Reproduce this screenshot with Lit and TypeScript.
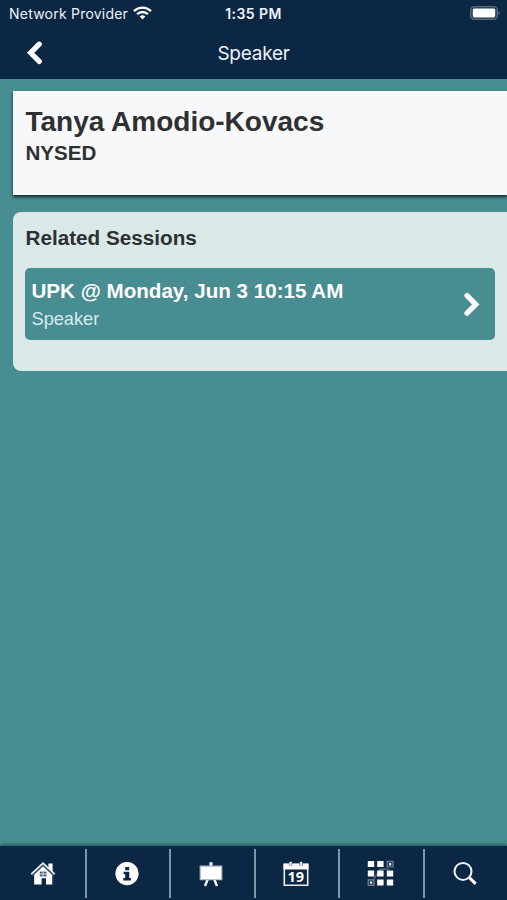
import { LitElement, html, css, svg } from "lit";
import { customElement } from "lit/decorators.js";

const home = svg`<svg width="26" height="26" viewBox="0 0 26 26">
  <path d="M18.4 2.6h4.2v8l-4.2-3.6z" fill="#fff"/>
  <path d="M13 4.8 22.3 13.2V23.6H16V17.2h-4.4v6.4H4.2V13.2z" fill="#fff"/>
  <path d="M1.8 14 13 3.4l11.2 10.6" fill="none" stroke="#3d546c" stroke-width="2.8"/>
  <path d="M1.2 13.2 13 2.2l11.8 11" fill="none" stroke="#e3ebf2" stroke-width="1.7"/>
  <path d="M9.8 10.6h6.6v4.8H9.8z" fill="#425a72"/>
  <path d="M13.1 10.4v5.2M9.8 13h6.6" stroke="#dde5ec" stroke-width="1"/>
</svg>`;

const info = svg`<svg width="26" height="26" viewBox="0 0 26 26">
  <circle cx="13" cy="12.6" r="11.6" fill="#fff"/>
  <path d="M11.2 5.9h4v3.4h-4zM9.6 10.7h5.7v6.2h1.6v2.6H9.3v-2.6h1.9v-3.6H9.6z" fill="#0b2744"/>
</svg>`;

const board = svg`<svg width="26" height="26" viewBox="0 0 26 26">
  <path d="M11.4 1.2h3.2v4h-3.2z" fill="#e4edf4"/>
  <path d="M9.6 18.6 7 25M16.4 18.6 19 25" stroke="#fff" stroke-width="2.4"/>
  <path d="M2.3 5.2h21.4v13.4H2.3z" fill="#fff" stroke="#b3c1cd" stroke-width="1.3"/>
</svg>`;

const calendar = svg`<svg width="26" height="26" viewBox="0 0 26 26">
  <path d="M1.3 3.2h23.4v21H1.3z" fill="#0b2744" stroke="#e4edf4" stroke-width="1.6"/>
  <path d="M.5 2.7h25v5.8H.5z" fill="#fff"/>
  <path d="M7.6 1v3.8M18.2 1v3.8" stroke="#51677e" stroke-width="3.4"/>
  <path d="M7.6 .8v3.6M18.2 .8v3.6" stroke="#fff" stroke-width="1.9"/>
</svg>`;

const grid = svg`<svg width="27" height="27" viewBox="0 0 27 27">
  <path d="M4.5 23 13 9.2h9" fill="none" stroke="#61758a" stroke-width="1.2"/>
  <path d="M.8 1h6.4v6H.8zM10.2 1h6.4v6h-6.4zM.8 10.4h6.4v6H.8zM10.2 10.4h6.4v6h-6.4zM19.8 10.4h6.4v6h-6.4zM10.2 19.6h6.4v6h-6.4zM19.8 19.6h6.4v6h-6.4z" fill="#fff"/>
  <path d="M20.2 1.4h5.8v5.6h-5.8zM1.2 19.8H7v5.6H1.2z" fill="#20394f" stroke="#71849a" stroke-width="1.2"/>
  <path d="M22 3.1h2.3v2.3H22zM3 21.5h2.3v2.3H3z" fill="#d8e1e9"/>
</svg>`;

const search = svg`<svg width="26" height="26" viewBox="0 0 26 26">
  <circle cx="11" cy="10.4" r="8.5" fill="none" stroke="#eff6fb" stroke-width="2"/>
  <path d="m17.3 16.6 6.4 6.2" stroke="#fff" stroke-width="3.1"/>
</svg>`;

@customElement("app-root")
export class AppRoot extends LitElement {
  static styles = css`
    :host {
      display: flex;
      flex-direction: column;
      width: 507px;
      height: 900px;
      overflow: hidden;
      background: #488d92;
      font-family: "Liberation Sans", Arial, sans-serif;
      color: #2e3032;
      white-space: nowrap;
    }
    * { box-sizing: border-box; }
    svg { display: block; flex: none; }
    header { background: #0b2744; height: 79px; flex: none; color: #edf3f8; font-family: Inter, sans-serif; }
    .status, .nav { display: grid; grid-template-columns: 1fr auto 1fr; align-items: center; }
    .status { height: 27px; padding: 0 7px 0 9px; font-size: 14px; }
    .carrier { display: flex; align-items: center; gap: 5px; letter-spacing: 0.22px; }
    .time { font-weight: 600; font-size: 14px; letter-spacing: 0.42px; padding-right: 2px; }
    .battery { justify-self: end; margin-top: -1px; }
    .wifi { margin-top: -2px; }
    .nav { height: 52px; padding: 0 26px; }
    .title { font-size: 19px; letter-spacing: -0.25px; }
    main { flex: 1; display: flex; flex-direction: column; padding: 12px 0 0 13px; }
    .person {
      height: 104px;
      padding: 14px 12px 0 12.5px;
      background: #f7f8fa;
      box-shadow: 0 2px 3px #10292d;
    }
    h1, h2, h3, p { margin: 0; }
    h1 { font-size: 28px; line-height: 34px; }
    .org { font-size: 20.6px; line-height: 28px; font-weight: 700; }
    .related {
      margin-top: 17px;
      height: 159px;
      padding: 13px 12px 0;
      border-radius: 8px 0 0 8px;
      background: #dae8e8;
    }
    h2 { font-size: 20.7px; line-height: 26px; padding-left: 0.5px; }
    .session {
      display: flex;
      align-items: center;
      justify-content: space-between;
      margin-top: 17px;
      height: 72px;
      padding: 2px 14px 0 6.5px;
      border-radius: 5px;
      background: #488d92;
      color: #fff;
    }
    h3 { font-size: 20.6px; line-height: 29px; }
    .role { font-size: 18.2px; line-height: 29px; color: #d9eaec; }
    footer {
      display: grid;
      grid-template-columns: repeat(6, 1fr);
      height: 54px;
      padding: 3px 0 2px;
      background: #0b2744;
      box-shadow: 0 -1px 4px #24484c;
    }
    .tab { display: flex; align-items: center; justify-content: center; padding-right: 2px; }
    .tab:first-child { padding: 0 0 0 2px; }
    .tab + .tab { border-left: 2px solid #8396a7; }
    .day { position: relative; }
    .num {
      position: absolute;
      left: 0;
      right: 0;
      top: 8px;
      text-align: center;
      font: 700 14.5px/16px "Open Sans", sans-serif;
      color: #fff;
    }
  `;

  render() {
    return html`
      <header>
        <div class="status">
          <div class="carrier">
            <span class="label">Network Provider</span>
            <svg class="wifi" width="19" height="14" viewBox="0 0 19 14" fill="none" stroke="#fff" stroke-width="2.4">
              <path d="M1 5.1a12.2 12.2 0 0 1 17 0M4.1 8.2a7.8 7.8 0 0 1 10.8 0" />
              <path d="M6.7 10.4a4.2 4.2 0 0 1 5.6 0L9.5 13.4z" fill="#fff" stroke="none" />
            </svg>
          </div>
          <span class="time">1:35 PM</span>
          <svg class="battery" width="30" height="14" viewBox="0 0 30 14">
            <rect x=".7" y=".7" width="26.6" height="12.6" rx="3.6" fill="#20394f" stroke="#586c80" stroke-width="1.3" />
            <rect x="2.8" y="2.5" width="22.4" height="9" rx="1.4" fill="#fff" />
            <path d="M28.5 4.8c1.7.8 1.7 3.6 0 4.4z" fill="#586c80" />
          </svg>
        </div>
        <div class="nav">
          <svg width="17" height="24" viewBox="0 0 17 24">
            <path d="M13.2 3.2 4.6 11.8l8.6 8.6" fill="none" stroke="#fff" stroke-width="5.2" stroke-linecap="round" />
          </svg>
          <span class="title">Speaker</span>
        </div>
      </header>
      <main>
        <section class="person">
          <h1><span class="name">Tanya Amodio-Kovacs</span></h1>
          <p class="org">NYSED</p>
        </section>
        <section class="related">
          <h2>Related Sessions</h2>
          <div class="session">
            <div>
              <h3>UPK @ Monday, Jun 3 10:15 AM</h3>
              <p class="role">Speaker</p>
            </div>
            <svg width="18" height="26" viewBox="0 0 18 26">
              <path d="m4 3.6 8.8 8.8L4 21.2" fill="none" stroke="#fff" stroke-width="5.2" stroke-linecap="round" />
            </svg>
          </div>
        </section>
      </main>
      <footer>
        <div class="tab">${home}</div>
        <div class="tab">${info}</div>
        <div class="tab">${board}</div>
        <div class="tab"><div class="day">${calendar}<span class="num">19</span></div></div>
        <div class="tab">${grid}</div>
        <div class="tab">${search}</div>
      </footer>
    `;
  }
}
